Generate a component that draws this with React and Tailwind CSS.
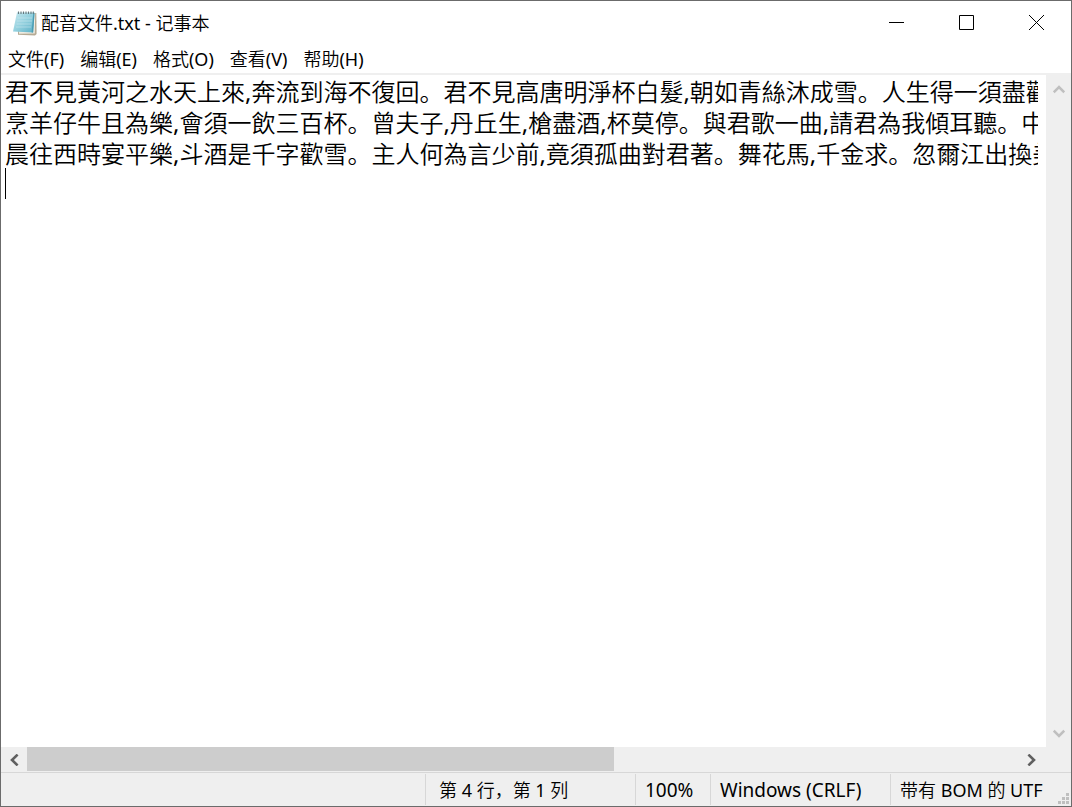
import { useState } from "react";

const menus = ["文件(F)", "编辑(E)", "格式(O)", "查看(V)", "帮助(H)"];

const initialText = [
  "君不見黃河之水天上來,奔流到海不復回。君不見高唐明淨杯白髮,朝如青絲沐成雪。人生得一須盡歡",
  "烹羊仔牛且為樂,會須一飲三百杯。曾夫子,丹丘生,槍盡酒,杯莫停。與君歌一曲,請君為我傾耳聽。中",
  "晨往西時宴平樂,斗酒是千字歡雪。主人何為言少前,竟須孤曲對君著。舞花馬,千金求。忽爾江出換美",
  "",
].join("\n");

function NotepadIcon() {
  return (
    <svg width="26" height="26" viewBox="0 0 26 26" aria-hidden="true">
      <defs>
        <linearGradient id="sheet" x1="0" y1="0" x2="1" y2="1">
          <stop offset="0" stopColor="#c9e9f0" />
          <stop offset="0.5" stopColor="#93d0de" />
          <stop offset="1" stopColor="#5cb0c6" />
        </linearGradient>
      </defs>
      <path d="M6 4 L24.3 3 L24.6 24 L23 25.4 L6 24.8 Z" fill="#b5aa94" />
      <path d="M6 4 L23.2 3 L22.8 23.4 L7 23.8 Z" fill="#efece2" />
      <path d="M5 2.5 L22.5 2.5 L21 22.5 L1 21.5 Z" fill="url(#sheet)" />
      <path d="M21.3 3 L22.6 3 L21.2 22.5 L19.6 22.4 Z" fill="#4a9db4" />
      <path
        d="M5.5 8 H20 M5 11 H20 M4.5 14 H19.5 M4 17 H19"
        stroke="#d5eef4"
        strokeWidth="0.7"
        opacity="0.7"
      />
      <path
        d="M6.5 1.4 V4 M9 1.4 V4 M11.5 1.4 V4 M14 1.4 V4 M16.5 1.4 V4 M19 1.4 V4 M21.3 1.4 V4"
        stroke="#66777c"
        strokeWidth="1.1"
      />
    </svg>
  );
}

function TitleBar() {
  return (
    <header className="flex h-[43px] shrink-0 items-center bg-white">
      <div className="flex min-w-0 flex-1 items-center gap-[3px] pl-[11px]">
        <NotepadIcon />
        <h1 className="truncate text-[18px] leading-6">配音文件.txt - 记事本</h1>
      </div>
      <div className="flex h-full shrink-0">
        <button type="button" aria-label="最小化" className="flex w-[70px] items-center justify-center hover:bg-gray-200">
          <svg width="15" height="15" viewBox="0 0 15 15">
            <path d="M0 7.5 H15" stroke="#000" />
          </svg>
        </button>
        <button type="button" aria-label="最大化" className="flex w-[70px] items-center justify-center hover:bg-gray-200">
          <svg width="15" height="15" viewBox="0 0 15 15">
            <path d="M0.5 0.5 H14.5 V14.5 H0.5 Z" fill="none" stroke="#000" />
          </svg>
        </button>
        <button type="button" aria-label="关闭" className="flex w-[70px] items-center justify-center hover:bg-red-500">
          <svg width="15" height="15" viewBox="0 0 15 15">
            <path d="M0 0 L15 15 M15 0 L0 15" stroke="#000" />
          </svg>
        </button>
      </div>
    </header>
  );
}

function MenuBar() {
  return (
    <nav className="flex h-[29px] shrink-0 items-center gap-0.5 bg-white">
      {menus.map((menu) => (
        <button key={menu} type="button" className="px-[7px] text-[18px] leading-6 whitespace-nowrap hover:bg-sky-100">
          {menu}
        </button>
      ))}
    </nav>
  );
}

function Editor() {
  const [text, setText] = useState(initialText);
  const [pristine, setPristine] = useState(true);

  return (
    <main className="relative min-w-0 flex-1 bg-white pt-px pr-2 pl-1">
      <textarea
        aria-label="文本编辑器"
        wrap="off"
        spellCheck={false}
        value={text}
        onFocus={() => setPristine(false)}
        onChange={(e) => setText(e.target.value)}
        className="block h-full w-full resize-none overflow-hidden text-2xl leading-[31px] outline-none"
      />
      {/* caret on line 4 */}
      {pristine && <span className="pointer-events-none absolute top-[93px] left-1 h-[31px] w-px bg-black" />}
    </main>
  );
}

function VerticalScrollbar() {
  return (
    <div className="flex w-[25px] shrink-0 flex-col justify-between bg-[#efefef]">
      <button type="button" aria-label="向上滚动" disabled className="flex h-[29px] items-center justify-center">
        <svg width="12" height="9" viewBox="0 0 12 9">
          <path d="M0.7 7.3 L6 2 L11.3 7.3" fill="none" stroke="#bfbfbf" strokeWidth="2.6" />
        </svg>
      </button>
      <button type="button" aria-label="向下滚动" disabled className="flex h-[27px] items-center justify-center">
        <svg width="12" height="9" viewBox="0 0 12 9">
          <path d="M0.7 1.7 L6 7 L11.3 1.7" fill="none" stroke="#bfbfbf" strokeWidth="2.6" />
        </svg>
      </button>
    </div>
  );
}

function HorizontalScrollbar() {
  return (
    <div className="flex h-[25px] shrink-0 bg-[#efefef] pr-[27px]">
      <button type="button" aria-label="向左滚动" className="flex w-[26px] items-center justify-center">
        <svg width="9" height="12" viewBox="0 0 9 12">
          <path d="M7.6 0.6 L2 6 L7.6 11.4" fill="none" stroke="#606060" strokeWidth="2.6" />
        </svg>
      </button>
      <div className="flex-1 pb-px">
        <div className="h-full w-[59.2%] bg-[#cdcdcd]" />
      </div>
      <button type="button" aria-label="向右滚动" className="flex w-[26px] items-center justify-center">
        <svg width="9" height="12" viewBox="0 0 9 12">
          <path d="M1.4 0.6 L7 6 L1.4 11.4" fill="none" stroke="#606060" strokeWidth="2.6" />
        </svg>
      </button>
    </div>
  );
}

function StatusBar() {
  return (
    <footer className="relative flex h-[34px] shrink-0 justify-end border-t border-[#d7d7d7] bg-[#efefef] py-px leading-[33px] whitespace-nowrap">
      <div className="w-[210px] border-l border-[#d7d7d7] pl-[13px] text-[18px]">第 4 行，第 1 列</div>
      <div className="w-[75px] border-l border-[#d7d7d7] pl-[9px] text-[19px]">100%</div>
      <div className="w-[180px] border-l border-[#d7d7d7] pl-[9px] text-[19px]">Windows (CRLF)</div>
      <div className="w-[181px] border-l border-[#d7d7d7] pl-[9px] text-[18px]">带有 BOM 的 UTF</div>
      <svg className="absolute right-[2px] bottom-[2px]" width="11" height="11" viewBox="0 0 11 11" aria-hidden="true">
        <path
          d="M8 0h3v3h-3z M4 4h3v3h-3z M8 4h3v3h-3z M0 8h3v3h-3z M4 8h3v3h-3z M8 8h3v3h-3z"
          fill="#bfbfbf"
        />
      </svg>
    </footer>
  );
}

function App() {
  return (
    <div
      lang="zh-CN"
      className="flex h-screen w-full flex-col overflow-hidden border border-[#6b6b6b] bg-white font-['Noto_Sans','Noto_Sans_CJK_SC_DemiLight','Noto_Sans_CJK_SC',sans-serif] font-normal text-black"
    >
      <TitleBar />
      <MenuBar />
      <div className="flex min-h-0 flex-1 border-t-2 border-[#efefef]">
        <Editor />
        <VerticalScrollbar />
      </div>
      <HorizontalScrollbar />
      <StatusBar />
    </div>
  );
}

export default App;
